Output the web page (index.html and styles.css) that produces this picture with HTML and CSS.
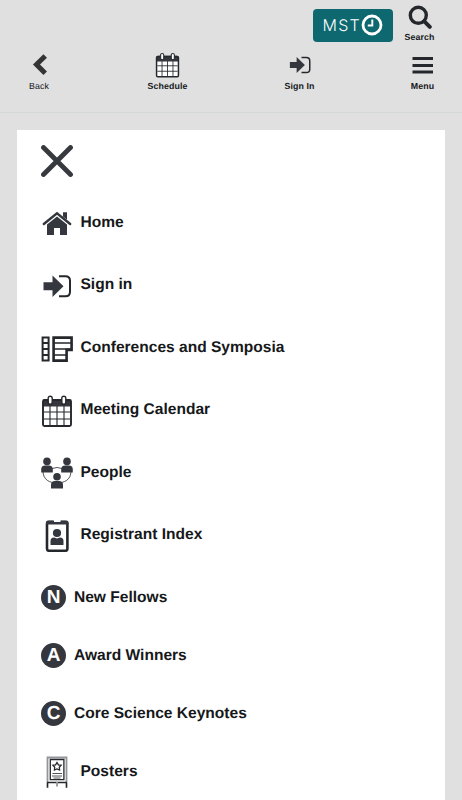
FILE: index.html
```html
<!DOCTYPE html>
<html lang="en">
<head>
<meta charset="utf-8">
<meta name="viewport" content="width=device-width, initial-scale=1">
<title>Menu</title>
<link rel="stylesheet" href="styles.css">
</head>
<body>
<svg class="defs" aria-hidden="true">
  <symbol id="calendar" viewBox="0 0 32 32">
    <rect x="2" y="6" width="28" height="25" rx="1.5" class="cal-paper"/>
    <path d="M2 11.500V6q0-2 2-2h24q2 0 2 2v5.500z" class="fill"/>
    <path d="M9 11v19M16 11v19M23 11v19M3 17h26M3 24h26" class="line thin"/>
    <rect x="2" y="5" width="28" height="26" rx="1.500" class="line edge"/>
    <rect x="7.200" y="1.200" width="4" height="8" rx="2" class="cal-ring"/>
    <rect x="20.800" y="1.200" width="4" height="8" rx="2" class="cal-ring"/>
  </symbol>
  <symbol id="signin" viewBox="0 0 32 24">
    <path d="M2.500 8h9V1.300L22.500 12 11.500 22.700V16h-9z" class="fill"/>
    <path d="M18 2h6.500q4.500 0 4.500 4.500v11q0 4.500-4.500 4.500H18" class="line"/>
  </symbol>
</svg>
<header class="header">
  <div class="tools">
    <div class="zone"><span>MST</span>
      <svg width="22" height="22" viewBox="0 0 22 22"><circle cx="11" cy="11" r="9" fill="none" stroke="#fff" stroke-width="2.800"/><path d="M11.300 5.500v6H6.800" fill="none" stroke="#fff" stroke-width="1.900"/></svg>
    </div>
    <div class="tool">
      <svg width="24" height="25" viewBox="0 0 24 25"><circle cx="10.300" cy="10.300" r="8" class="line fat"/><path d="M16.300 16.300l5.500 5.500" class="line fatter"/></svg>
      <span>Search</span>
    </div>
  </div>
  <nav class="bar">
    <div class="tool back"><svg width="24" height="26" viewBox="0 0 24 26"><path d="M18.200 4l-8.700 8.500 8.700 8.700" class="line chevron"/></svg><span>Back</span></div>
    <div class="tool schedule"><svg width="25" height="26"><use href="#calendar" width="25" height="26"/></svg><span>Schedule</span></div>
    <div class="tool sign"><svg width="24" height="26"><use href="#signin" y="4" width="24" height="18"/></svg><span>Sign In</span></div>
    <div class="tool menu"><svg width="22" height="26" viewBox="0 0 22 26"><path d="M.500 6.500h20.500M.500 13.500h20.500M.500 20h20.500" class="line burger"/></svg><span>Menu</span></div>
  </nav>
</header>
<main class="panel">
  <button class="close" aria-label="Close"><svg width="32" height="32" viewBox="0 0 32 32"><path d="M2.500 2.500l27 27M29.500 2.500l-27 27" class="line cross"/></svg></button>
  <ul class="list">
    <li><svg class="icon" viewBox="0 0 32 32"><path d="M2.800 17L16 6.300 29.200 17" class="line home-roof"/><path d="M22 5.200h4v7.600l-4-3.200z" class="fill"/><path d="M6 17.500L16 9.500l10 8V28h-7v-7h-6v7H6z" class="fill"/></svg><span>Home</span></li>
    <li><svg class="icon" viewBox="0 0 32 32"><use href="#signin" y="4.200" width="32" height="24"/></svg><span>Sign in</span></li>
    <li><svg class="icon" viewBox="0 0 32 32"><path d="M1.600 5.600h6v23h-6zM2 11h6M2 17h6M2 23h6" class="line block strip"/><path d="M12.600 5.600h18v12.300h-5v10.700h-13z" class="line block"/><path d="M13 11h17M13 17h17M13 23h12" class="line mid"/></svg><span>Conferences and Symposia</span></li>
    <li><svg class="icon" viewBox="0 0 32 32"><use href="#calendar" width="32" height="32"/></svg><span>Meeting Calendar</span></li>
    <li><svg class="icon" viewBox="0 0 32 32"><path d="M2 14c0 9 7 12 14 12s14-3 14-12M11 11.500q5-2 10 0" class="line hair"/><circle cx="6" cy="4.400" r="3.800" class="fill"/><path d="M.200 15.500v-3q0-4 4-4h3.600q4 0 4 4v3z" class="fill"/><circle cx="26" cy="4.400" r="3.800" class="fill"/><path d="M20.200 15.500v-3q0-4 4-4h3.600q4 0 4 4v3z" class="fill"/><circle cx="16" cy="19.500" r="4.600" fill="#fff"/><circle cx="16" cy="19.800" r="3.800" class="fill"/><path d="M10 31.500v-3.500q0-4 4-4h4q4 0 4 4v3.500z" class="fill"/></svg><span>People</span></li>
    <li><svg class="icon" viewBox="0 0 32 32"><rect x="6" y="2" width="20.400" height="28.800" rx="2" class="line block"/><path d="M5 4.500V2.500Q5 .500 7 .500h5.500v1h7v-1h6q2 0 2 2v2z" class="fill"/><path d="M13 0h6.500v2H13z" fill="#fff"/><circle cx="16" cy="13" r="4.100" class="fill"/><path d="M9.500 24.500V21q0-3.500 3.500-3.500l3 1 3-1q3.500 0 3.500 3.500v3.500q0 .500-.500.500H10q-.500 0-.500-.500z" class="fill"/></svg><span>Registrant Index</span></li>
    <li class="lettered"><b class="disc">N</b><span>New Fellows</span></li>
    <li class="short"><b class="disc">A</b><span>Award Winners</span></li>
    <li class="short"><b class="disc">C</b><span>Core Science Keynotes</span></li>
    <li class="short"><svg class="icon" viewBox="0 0 32 32"><path d="M6.500 32V1.500h19V32" class="line easel"/><path d="M9.300 3.500h13.600v20.200H9.300zM6 26.500h20M6.500 27v4.500M25.500 27v4.500" class="line poster"/><path d="M16 26v4.500" class="line easel"/><path d="M16 6.500l1.400 2.300 2.700.5-1.800 2 .3 2.700-2.600-1-2.600 1 .3-2.700-1.800-2 2.700-.5z" class="line mid"/><path d="M11.500 17.500h9.500M11 20h10M12.500 22h7" class="line hair"/></svg><span>Posters</span></li>
  </ul>
</main>
</body>
</html>
```
FILE: styles.css
```css
* { box-sizing: border-box; }
body { margin: 0; height: 800px; overflow: hidden; background: #e0e0e0; color: #16181a; font-family: "Liberation Sans", Arial, sans-serif; text-rendering: geometricPrecision; }
svg { display: block; }
.defs { position: absolute; width: 0; height: 0; }
.fill { fill: #34383e; }
.line { fill: none; stroke: #24282d; stroke-width: 2; }
.thin { stroke-width: 1.1; }
.mid { stroke-width: 1.3; }
.edge { stroke-width: 1.9; }
.hair { stroke-width: .8; }
.block { stroke-width: 2.6; }
.strip { stroke-width: 2; }
.poster { stroke-width: 1.3; }
.easel { stroke: #92969a; stroke-width: 1.8; }
.fat { stroke-width: 3.4; }
.fatter { stroke-width: 4; stroke-linecap: round; }
.chevron { stroke: #343434; stroke-width: 5; }
.burger { stroke-width: 3; }
.cross { stroke: #363a3f; stroke-width: 4.8; stroke-linecap: round; }
.home-roof { stroke: #34383e; stroke-width: 2.4; stroke-linecap: round; }
.cal-paper { fill: #fff; }
.cal-ring { fill: #fff; stroke: #24282d; stroke-width: 1.4; }
.header { height: 113px; border-bottom: 1px solid #d3d7d7; }
.tools { display: flex; justify-content: flex-end; height: 50px; padding-right: 20px; }
.zone { display: flex; align-items: center; width: 80px; height: 33px; margin: 8.5px 4px 0 0; padding-left: 9.5px; border-radius: 4px; background: #0d6870; color: #fff; font: 300 16px/32px Inter, "Liberation Sans", sans-serif; letter-spacing: 1.3px; }
.zone span { width: 38px; }
.zone svg { flex: none; }
.tool { display: flex; flex-direction: column; align-items: center; font-size: 8.8px; line-height: 12px; font-weight: bold; letter-spacing: .1px; white-space: nowrap; }
.tools .tool { width: 45px; padding-top: 5px; }
.tools .tool span { margin-top: 1px; }
.bar { display: grid; grid-template-columns: 78px 179px 85px 120px; padding-top: 2px; }
.bar span { margin-top: 2px; }
.bar .back { font-weight: normal; }
.menu { padding-left: 41px; }
.panel { margin: 16.500px 17px 0 16.500px; height: 700px; background: #fff; padding: 15.500px 0 0 24.500px; }
.close { display: block; border: 0; padding: 0; background: none; }
.list { list-style: none; margin: 14px 0 0; padding: 0; }
.list li { display: flex; align-items: center; height: 62.500px; font-size: 15.550px; line-height: 18px; font-weight: bold; }
.list li span { margin-top: 1px; }
.list .lettered { height: 60.250px; padding-top: 2.250px; }
.list .short { height: 58px; }
.icon { width: 32px; height: 32px; margin-right: 7.500px; position: relative; top: 1px; }
.disc { width: 25px; height: 25px; margin: -.5px 8px 0 0; border-radius: 50%; background: #34383e; color: #fff; font-size: 19px; line-height: 26px; text-align: center; }
```
